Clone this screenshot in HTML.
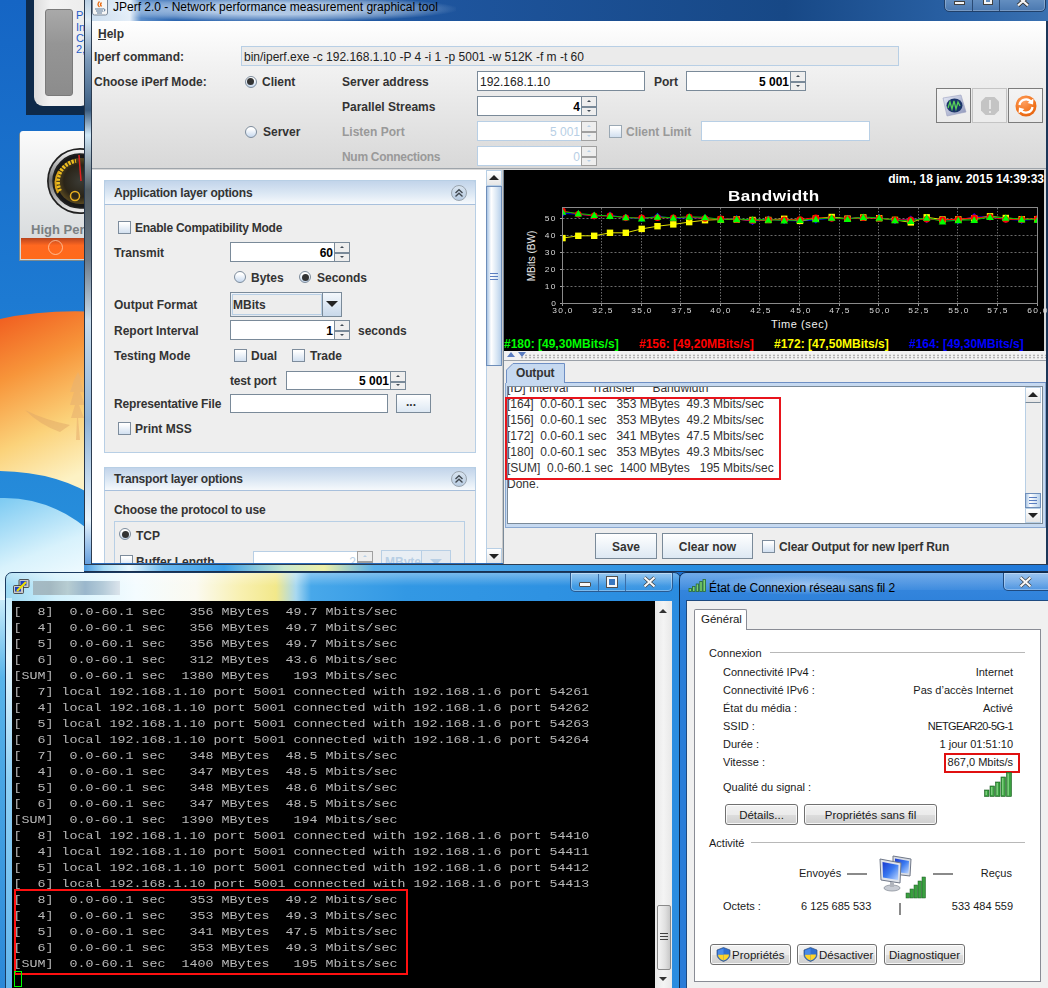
<!DOCTYPE html>
<html><head><meta charset="utf-8">
<style>
*{box-sizing:border-box;margin:0;padding:0}
html,body{width:1048px;height:988px;overflow:hidden;background:#1a6cc4}
body{position:relative;font-family:"Liberation Sans",sans-serif;}
.a{position:absolute}
.t{position:absolute;white-space:pre;line-height:1}
</style></head><body>
<div class="a" style="left:0;top:0;width:1048px;height:988px;background:#1a6cc8"></div>
<svg class="a" style="left:0;top:0" width="100" height="988">
  <defs>
    <linearGradient id="dg" x1="0" y1="0" x2="0" y2="1">
      <stop offset="0" stop-color="#1565c4"/>
      <stop offset="0.5" stop-color="#1d7ad2"/>
      <stop offset="1" stop-color="#2a94de"/>
    </linearGradient>
    <linearGradient id="lo" x1="0" y1="0" x2="0" y2="1">
      <stop offset="0" stop-color="#c8ecfa"/>
      <stop offset="0.2" stop-color="#58b4ea"/>
      <stop offset="1" stop-color="#2a88d8"/>
    </linearGradient>
    <linearGradient id="og" x1="0" y1="0" x2="0.25" y2="1">
      <stop offset="0" stop-color="#f05a1e"/>
      <stop offset="0.35" stop-color="#f7953a"/>
      <stop offset="0.7" stop-color="#fbd27a"/>
      <stop offset="1" stop-color="#fdf2c4"/>
    </linearGradient>
    <linearGradient id="gl" x1="0" y1="0" x2="0.4" y2="1">
      <stop offset="0" stop-color="#7ccaf2"/>
      <stop offset="0.6" stop-color="#d8f2fc"/>
      <stop offset="1" stop-color="#f4fcff"/>
    </linearGradient>
  </defs>
  <rect x="0" y="0" width="100" height="600" fill="url(#dg)"/>
  <rect x="0" y="600" width="100" height="388" fill="url(#lo)"/>
  <path d="M0 319 Q45 309 100 312 L100 500 Q60 472 0 471 Z" fill="url(#og)"/>
  <path d="M0 498 Q55 496 100 540 L100 600 L0 600 Z" fill="url(#gl)"/>
  <path d="M74 380 L78 372 L82 380 L80 380 L84 392 L80 392 L85 405 L79 405 L84 418 L78 418 L80 440 L76 440 L77 418 L71 418 L75 405 L70 405 L74 392 L70 392 Z" fill="#e8b070" opacity="0.6"/>
  <path d="M25 410 Q45 420 70 425 L60 432 Q40 425 25 410 Z" fill="#e0a868" opacity="0.5"/>
</svg>
<div class="a" style="left:26px;top:0px;width:60px;height:115px;background:#0e2a4a"></div>
<div class="a" style="left:34px;top:-10px;width:56px;height:116px;background:linear-gradient(90deg,#dcdcdc,#f2f2f2 30%,#ececec);border-radius:9px"></div>
<div class="a" style="left:45px;top:9px;width:28px;height:87px;background:linear-gradient(180deg,#a9a9a9,#959595 40%,#8c8c8c);border-radius:3px;border:1px solid #7a7a7a"></div>
<div class="t " style="left:76px;top:9px;font:11px 'Liberation Sans',sans-serif;color:#1f5cc8;">Pr</div>
<div class="t " style="left:76px;top:21px;font:11px 'Liberation Sans',sans-serif;color:#1f5cc8;">In</div>
<div class="t " style="left:76px;top:32px;font:11px 'Liberation Sans',sans-serif;color:#1f5cc8;">Ce</div>
<div class="t " style="left:76px;top:43px;font:11px 'Liberation Sans',sans-serif;color:#1f5cc8;">2,</div>
<div class="a" style="left:20px;top:131px;width:66px;height:129px;background:linear-gradient(180deg,#fbfbfb,#d2d6d8);border-radius:3px 0 0 0;box-shadow:-1px 1px 0 #7a8a90"></div>
<div class="a" style="left:21px;top:238px;width:65px;height:21px;background:linear-gradient(180deg,#b8441e,#ff6820 35%,#ff6a1a)"></div>
<div class="a" style="left:48px;top:240px;width:15px;height:15px;border:1px solid rgba(255,220,190,.7);border-radius:50%"></div>
<svg class="a" style="left:46px;top:147px" width="38" height="68"><defs><radialGradient id="gface" cx="0.5" cy="0.5" r="0.5"><stop offset="0" stop-color="#3a3a34"/><stop offset="0.7" stop-color="#2a2418"/><stop offset="1" stop-color="#584820"/></radialGradient>
<linearGradient id="gsil" x1="0" y1="0" x2="0" y2="1"><stop offset="0" stop-color="#f0f0f0"/><stop offset="0.5" stop-color="#707070"/><stop offset="1" stop-color="#e8e8e8"/></linearGradient></defs>
<circle cx="34" cy="34" r="33" fill="#202020"/><circle cx="34" cy="34" r="29.5" fill="none" stroke="url(#gsil)" stroke-width="3.5"/>
<circle cx="34" cy="34" r="26" fill="#181818"/><circle cx="34" cy="34" r="23" fill="url(#gface)"/>
<path d="M14 44 A21 21 0 0 1 30 14" stroke="#f0c020" stroke-width="4" fill="none" stroke-dasharray="2.2,1.3"/>
<path d="M12 46 A23 23 0 0 1 13 24" stroke="#d8a018" stroke-width="2" fill="none"/>
<line x1="35" y1="34" x2="33" y2="8" stroke="#e02020" stroke-width="1.5"/>
<circle cx="29" cy="49" r="4.5" fill="none" stroke="#e8b020" stroke-width="1.5"/></svg>
<div class="t " style="left:31px;top:222px;font:bold 13px 'Liberation Sans',sans-serif;color:#7a8082;">High Per</div>
<div class="a" style="left:84px;top:0px;width:964px;height:572px;background:linear-gradient(180deg,#1f5aa8,#2a6ab8);border-left:1px solid #1a2a40;border-radius:7px 0 0 0"></div>
<div class="a" style="left:85px;top:0px;width:963px;height:21px;background:linear-gradient(90deg,#c9dcee 0,#e4eef8 45px,#5a8cc8 56px,#2d66b0 90px,#1e559e 350px,#174886 700px,#2a62a6 880px,#4a80bc 1048px)"></div>
<div class="a" style="left:84px;top:0px;width:8px;height:572px;background:linear-gradient(180deg,#b8cfe4 0,#e0ecf6 20px,#7a98b8 60px,#3a5c80 110px,#d0e8f8 135px,#505a60 190px,#6a7a8a 260px,#c8dcec 320px,#90b4d8 420px,#e8f4fc 520px,#4a8ed8 572px);border-left:1px solid #26364a;border-right:1px solid #2c3c50"></div>
<div class="a" style="left:84px;top:564px;width:964px;height:8px;background:linear-gradient(90deg,#4a9ae0 0,#a8dcf6 20px,#e8f8fe 45px,#6ab8ee 80px,#3a9ee8 140px,#c8e8d0 200px,#eef0a8 240px,#5ab0ea 290px,#2a8ee0 600px,#2078d8);border-top:1px solid #2c3c50;border-bottom:1px solid #1a3050"></div>
<div class="a" style="left:1046px;top:21px;width:2px;height:543px;background:#1c3658"></div>
<div class="a" style="left:96px;top:-4px;width:360px;height:26px;background:radial-gradient(ellipse at center,rgba(235,245,255,.7) 30%,rgba(235,245,255,.35) 55%,rgba(255,255,255,0) 72%)"></div>
<svg class="a" style="left:92px;top:0px" width="17" height="16"><rect x="0.5" y="-3" width="15" height="18" rx="2" fill="#f6f6f6" stroke="#7a8898"/>
<path d="M7.5 1.5 Q4.5 4.5 7.5 7 M9.5 2.5 Q7.5 4.5 9.5 6.5" stroke="#e86a10" stroke-width="1.3" fill="none"/>
<path d="M3 9 H11.5 M4 11 H11 M5 13 H10" stroke="#5a7898" stroke-width="1" fill="none"/><path d="M11.5 8.5 Q14.5 9.5 12 11.5" stroke="#5a7898" stroke-width="1" fill="none"/></svg>
<div class="t " style="left:113px;top:0px;font:12px 'Liberation Sans',sans-serif;color:#000;">JPerf 2.0 - Network performance measurement graphical tool</div>
<div class="a" style="left:944px;top:-4px;width:102px;height:16px;background:linear-gradient(180deg,#6a94c4,#4a78b0);border:1px solid #20406a;border-radius:0 0 5px 5px;box-shadow:inset 0 0 0 1px rgba(255,255,255,.25)"></div>
<div class="a" style="left:972px;top:-2px;width:1px;height:13px;background:#2a4a74"></div>
<div class="a" style="left:999px;top:-2px;width:1px;height:13px;background:#2a4a74"></div>
<div class="a" style="left:954px;top:1px;width:11px;height:4px;background:#f4f4f4;border:1px solid #404040"></div>
<div class="a" style="left:984px;top:-2px;width:8px;height:6px;border:2px solid #f4f4f4;box-shadow:0 0 0 1px #404040"></div>
<svg class="a" style="left:1016px;top:-5px" width="14" height="12"><path d="M2 1.5 L12 10.5 M12 1.5 L2 10.5" stroke="#303030" stroke-width="3.8"/><path d="M2 1.5 L12 10.5 M12 1.5 L2 10.5" stroke="#f4f4f4" stroke-width="2.3"/></svg>
<div class="a" style="left:92px;top:21px;width:954px;height:147px;background:linear-gradient(180deg,#ffffff,#f2f2f2 30%,#d8d8d8)"></div>
<div class="a" style="left:92px;top:168px;width:954px;height:2px;background:#9ea4aa;border-bottom:1px solid #d8d8d8"></div>
<div class="t " style="left:98px;top:27px;font:bold 12px 'Liberation Sans',sans-serif;color:#333;">Help</div>
<div class="a" style="left:98px;top:39px;width:8px;height:1px;background:#333"></div>
<div class="t " style="left:94px;top:50px;font:bold 12px 'Liberation Sans',sans-serif;color:#333;">Iperf command:</div>
<div class="a" style="left:241px;top:46px;width:658px;height:20px;background:#ebebeb;border:1px solid #b8cfe5"></div>
<div class="t " style="left:244px;top:50px;font:12px 'Liberation Sans',sans-serif;color:#222;">bin/iperf.exe -c 192.168.1.10 -P 4 -i 1 -p 5001 -w 512K -f m -t 60</div>
<div class="t " style="left:94px;top:75px;font:bold 12px 'Liberation Sans',sans-serif;color:#333;">Choose iPerf Mode:</div>
<div class="a" style="left:244.5px;top:75.5px;width:12px;height:12px;border-radius:50%;border:1px solid #7d8c9c;background:linear-gradient(180deg,#ffffff 20%,#c6d8ee)"></div>
<div class="a" style="left:247.0px;top:78.0px;width:7px;height:7px;border-radius:50%;background:#333"></div>
<div class="t " style="left:262px;top:75px;font:bold 12px 'Liberation Sans',sans-serif;color:#333;">Client</div>
<div class="a" style="left:244.5px;top:125.5px;width:12px;height:12px;border-radius:50%;border:1px solid #7d8c9c;background:linear-gradient(180deg,#ffffff 20%,#c6d8ee)"></div>
<div class="t " style="left:263px;top:125px;font:bold 12px 'Liberation Sans',sans-serif;color:#333;">Server</div>
<div class="t " style="left:342px;top:75px;font:bold 12px 'Liberation Sans',sans-serif;color:#333;">Server address</div>
<div class="a" style="left:477px;top:71px;width:168px;height:20px;background:#fff;border:1px solid #7a8a99"></div>
<div class="t " style="left:480px;top:75px;font:12px 'Liberation Sans',sans-serif;color:#222;">192.168.1.10</div>
<div class="t " style="left:654px;top:75px;font:bold 12px 'Liberation Sans',sans-serif;color:#333;">Port</div>
<div class="a" style="left:686px;top:71px;width:105px;height:20px;background:#fff;border:1px solid #7a8a99"></div>
<div class="a" style="left:790px;top:71px;width:16px;height:11.0px;background:#eeeeee;border:1px solid #7a8a99"></div>
<div class="a" style="left:790px;top:81.0px;width:16px;height:10.0px;background:#eeeeee;border:1px solid #7a8a99;border-top-width:2px"></div>
<div class="a" style="left:795.5px;top:75px;width:0;height:0;border-left:2.5px solid transparent;border-right:2.5px solid transparent;border-bottom:2.5px solid #404a55"></div>
<div class="a" style="left:795.5px;top:85px;width:0;height:0;border-left:2.5px solid transparent;border-right:2.5px solid transparent;border-top:2.5px solid #404a55"></div>
<div class="t" style="right:259px;top:75px;font:bold 12px 'Liberation Sans',sans-serif;color:#000;text-align:right;">5 001</div>
<div class="t " style="left:342px;top:100px;font:bold 12px 'Liberation Sans',sans-serif;color:#333;">Parallel Streams</div>
<div class="a" style="left:477px;top:96px;width:105px;height:20px;background:#fff;border:1px solid #7a8a99"></div>
<div class="a" style="left:581px;top:96px;width:16px;height:11.0px;background:#eeeeee;border:1px solid #7a8a99"></div>
<div class="a" style="left:581px;top:106.0px;width:16px;height:10.0px;background:#eeeeee;border:1px solid #7a8a99;border-top-width:2px"></div>
<div class="a" style="left:586.5px;top:100px;width:0;height:0;border-left:2.5px solid transparent;border-right:2.5px solid transparent;border-bottom:2.5px solid #404a55"></div>
<div class="a" style="left:586.5px;top:110px;width:0;height:0;border-left:2.5px solid transparent;border-right:2.5px solid transparent;border-top:2.5px solid #404a55"></div>
<div class="t" style="right:468px;top:100px;font:bold 12px 'Liberation Sans',sans-serif;color:#000;text-align:right;">4</div>
<div class="t " style="left:342px;top:125px;font:bold 12px 'Liberation Sans',sans-serif;color:#999;">Listen Port</div>
<div class="a" style="left:477px;top:121px;width:105px;height:20px;background:#fff;border:1px solid #b8cfe5"></div>
<div class="a" style="left:581px;top:121px;width:16px;height:11.0px;background:#eeeeee;border:1px solid #a0a0a0"></div>
<div class="a" style="left:581px;top:131.0px;width:16px;height:10.0px;background:#eeeeee;border:1px solid #a0a0a0;border-top-width:2px"></div>
<div class="a" style="left:586.5px;top:125px;width:0;height:0;border-left:2.5px solid transparent;border-right:2.5px solid transparent;border-bottom:2.5px solid #b8cfe5"></div>
<div class="a" style="left:586.5px;top:135px;width:0;height:0;border-left:2.5px solid transparent;border-right:2.5px solid transparent;border-top:2.5px solid #b8cfe5"></div>
<div class="t" style="right:468px;top:125px;font:12px 'Liberation Sans',sans-serif;color:#b8cfe5;text-align:right;">5 001</div>
<div class="a" style="left:609px;top:125px;width:13px;height:13px;border:1px solid #9aa8b4;background:linear-gradient(180deg,#ffffff 10%,#d2e0f0)"></div>
<div class="t " style="left:626px;top:125px;font:bold 12px 'Liberation Sans',sans-serif;color:#999;">Client Limit</div>
<div class="a" style="left:701px;top:121px;width:169px;height:20px;background:#fff;border:1px solid #b8cfe5"></div>
<div class="t " style="left:342px;top:150px;font:bold 12px 'Liberation Sans',sans-serif;color:#999;letter-spacing:-0.3px">Num Connections</div>
<div class="a" style="left:477px;top:146px;width:105px;height:20px;background:#fff;border:1px solid #b8cfe5"></div>
<div class="a" style="left:581px;top:146px;width:16px;height:11.0px;background:#eeeeee;border:1px solid #a0a0a0"></div>
<div class="a" style="left:581px;top:156.0px;width:16px;height:10.0px;background:#eeeeee;border:1px solid #a0a0a0;border-top-width:2px"></div>
<div class="a" style="left:586.5px;top:150px;width:0;height:0;border-left:2.5px solid transparent;border-right:2.5px solid transparent;border-bottom:2.5px solid #b8cfe5"></div>
<div class="a" style="left:586.5px;top:160px;width:0;height:0;border-left:2.5px solid transparent;border-right:2.5px solid transparent;border-top:2.5px solid #b8cfe5"></div>
<div class="t" style="right:468px;top:150px;font:12px 'Liberation Sans',sans-serif;color:#b8cfe5;text-align:right;">0</div>
<div class="a" style="left:936px;top:88px;width:35px;height:35px;border:1px solid #7c7c7c;background:linear-gradient(180deg,#f4f4f4,#eaeaea)"></div>
<div class="a" style="left:972px;top:88px;width:35px;height:35px;border:1px solid #c4c4c4;background:#ececec"></div>
<div class="a" style="left:1008px;top:88px;width:35px;height:35px;border:1px solid #7c7c7c;background:linear-gradient(180deg,#f4f4f4,#eaeaea)"></div>
<svg class="a" style="left:940px;top:92px" width="28" height="28">
<defs><linearGradient id="ib1" x1="0" y1="0" x2="1" y2="1"><stop offset="0" stop-color="#e8ecf8"/><stop offset="1" stop-color="#8c94b8"/></linearGradient></defs>
<path d="M3 6 L21 3 L26 20 L7 24 Z" fill="url(#ib1)" stroke="#9aa0c0" stroke-width="0.6"/>
<ellipse cx="14.5" cy="13.5" rx="8" ry="7" fill="#1a3468"/>
<path d="M8 16 L10 10 L12 17 L14 9 L16 17 L18 10 L20 14" stroke="#58d058" stroke-width="1.3" fill="none"/>
</svg>
<svg class="a" style="left:976px;top:92px" width="28" height="28">
<path d="M9.5 5 H18.5 L23 9.5 V18.5 L18.5 23 H9.5 L5 18.5 V9.5 Z" fill="#c4c4c4"/>
<rect x="13" y="8" width="2" height="9" fill="#e6e6e6"/><rect x="13" y="19" width="2" height="2" fill="#e6e6e6"/>
</svg>
<svg class="a" style="left:1012px;top:92px" width="28" height="28">
<defs><radialGradient id="ib3" cx="0.4" cy="0.3" r="0.8"><stop offset="0" stop-color="#ffa060"/><stop offset="0.7" stop-color="#f07018"/><stop offset="1" stop-color="#e06010"/></radialGradient></defs>
<circle cx="14" cy="14" r="10.5" fill="url(#ib3)"/>
<path d="M7.5 13 A6.5 6.5 0 0 1 19.5 10.5" stroke="#fff" stroke-width="2.3" fill="none"/>
<path d="M21.5 6.5 L21 12.5 L15.5 11 Z" fill="#fff"/>
<path d="M20.5 15 A6.5 6.5 0 0 1 8.5 17.5" stroke="#fff" stroke-width="2.3" fill="none"/>
<path d="M6.5 21.5 L7 15.5 L12.5 17 Z" fill="#fff"/>
</svg>
<div class="a" style="left:0;top:0;width:1048px;height:563px;overflow:hidden">
<div class="a" style="left:92px;top:170px;width:410px;height:394px;background:#ffffff"></div>
<div class="a" style="left:104px;top:180px;width:372px;height:273px;background:#eeeeee;border:1px solid #b8cfe5"></div>
<div class="a" style="left:104px;top:180px;width:372px;height:25px;background:linear-gradient(180deg,#c2d4ea,#dce8f4 55%,#f6f9fc);border:1px solid #b8cfe5;border-bottom:1px solid #a8c0dc;border-radius:3px 3px 0 0"></div>
<div class="t " style="left:114px;top:186px;font:bold 12px 'Liberation Sans',sans-serif;color:#333;letter-spacing:-0.2px">Application layer options</div>
<div class="a" style="left:451px;top:184.5px;width:16px;height:16px;border-radius:50%;border:1px solid #9aa4ae;background:linear-gradient(180deg,#d8e4f0,#b8cce2)"></div>
<svg class="a" style="left:454px;top:187.5px" width="10" height="10"><path d="M1.5 5 L5 1.8 L8.5 5 M1.5 8.5 L5 5.3 L8.5 8.5" stroke="#404850" stroke-width="1.4" fill="none"/></svg>
<div class="a" style="left:118px;top:221px;width:13px;height:13px;border:1px solid #7d8c9c;background:linear-gradient(180deg,#ffffff 10%,#d2e0f0)"></div>
<div class="t " style="left:135px;top:221px;font:bold 12px 'Liberation Sans',sans-serif;color:#333;letter-spacing:-0.25px">Enable Compatibility Mode</div>
<div class="t " style="left:114px;top:246px;font:bold 12px 'Liberation Sans',sans-serif;color:#333;">Transmit</div>
<div class="a" style="left:230px;top:242px;width:105px;height:20px;background:#fff;border:1px solid #7a8a99"></div>
<div class="a" style="left:334px;top:242px;width:16px;height:11.0px;background:#eeeeee;border:1px solid #7a8a99"></div>
<div class="a" style="left:334px;top:252.0px;width:16px;height:10.0px;background:#eeeeee;border:1px solid #7a8a99;border-top-width:2px"></div>
<div class="a" style="left:339.5px;top:246px;width:0;height:0;border-left:2.5px solid transparent;border-right:2.5px solid transparent;border-bottom:2.5px solid #404a55"></div>
<div class="a" style="left:339.5px;top:256px;width:0;height:0;border-left:2.5px solid transparent;border-right:2.5px solid transparent;border-top:2.5px solid #404a55"></div>
<div class="t" style="right:715px;top:246px;font:bold 12px 'Liberation Sans',sans-serif;color:#000;text-align:right;">60</div>
<div class="a" style="left:234px;top:271px;width:12px;height:12px;border-radius:50%;border:1px solid #7d8c9c;background:linear-gradient(180deg,#ffffff 20%,#c6d8ee)"></div>
<div class="t " style="left:251px;top:271px;font:bold 12px 'Liberation Sans',sans-serif;color:#333;">Bytes</div>
<div class="a" style="left:299px;top:271px;width:12px;height:12px;border-radius:50%;border:1px solid #7d8c9c;background:linear-gradient(180deg,#ffffff 20%,#c6d8ee)"></div>
<div class="a" style="left:301.5px;top:273.5px;width:7px;height:7px;border-radius:50%;background:#333"></div>
<div class="t " style="left:317px;top:271px;font:bold 12px 'Liberation Sans',sans-serif;color:#333;">Seconds</div>
<div class="t " style="left:114px;top:298px;font:bold 12px 'Liberation Sans',sans-serif;color:#333;">Output Format</div>
<div class="a" style="left:230px;top:292px;width:112px;height:25px;background:linear-gradient(180deg,#eef2f8,#e4e8ee);border:1px solid #7a8a99"></div>
<div class="a" style="left:232px;top:294px;width:90px;height:21px;background:#ededed;border:1px solid #b8cfe5"></div>
<div class="t " style="left:233px;top:298px;font:bold 12px 'Liberation Sans',sans-serif;color:#333;">MBits</div>
<div class="a" style="left:322px;top:293px;width:19px;height:23px;background:linear-gradient(180deg,#f4f8fc,#c8d8ea);border-left:1px solid #7a8a99"></div>
<div class="a" style="left:326px;top:301px;width:0;height:0;border-left:6px solid transparent;border-right:6px solid transparent;border-top:6px solid #222"></div>
<div class="t " style="left:114px;top:324px;font:bold 12px 'Liberation Sans',sans-serif;color:#333;">Report Interval</div>
<div class="a" style="left:230px;top:320px;width:105px;height:20px;background:#fff;border:1px solid #7a8a99"></div>
<div class="a" style="left:334px;top:320px;width:16px;height:11.0px;background:#eeeeee;border:1px solid #7a8a99"></div>
<div class="a" style="left:334px;top:330.0px;width:16px;height:10.0px;background:#eeeeee;border:1px solid #7a8a99;border-top-width:2px"></div>
<div class="a" style="left:339.5px;top:324px;width:0;height:0;border-left:2.5px solid transparent;border-right:2.5px solid transparent;border-bottom:2.5px solid #404a55"></div>
<div class="a" style="left:339.5px;top:334px;width:0;height:0;border-left:2.5px solid transparent;border-right:2.5px solid transparent;border-top:2.5px solid #404a55"></div>
<div class="t" style="right:715px;top:324px;font:bold 12px 'Liberation Sans',sans-serif;color:#000;text-align:right;">1</div>
<div class="t " style="left:358px;top:324px;font:bold 12px 'Liberation Sans',sans-serif;color:#333;">seconds</div>
<div class="t " style="left:114px;top:349px;font:bold 12px 'Liberation Sans',sans-serif;color:#333;">Testing Mode</div>
<div class="a" style="left:234px;top:349px;width:13px;height:13px;border:1px solid #7d8c9c;background:linear-gradient(180deg,#ffffff 10%,#d2e0f0)"></div>
<div class="t " style="left:251px;top:349px;font:bold 12px 'Liberation Sans',sans-serif;color:#333;">Dual</div>
<div class="a" style="left:292px;top:349px;width:13px;height:13px;border:1px solid #7d8c9c;background:linear-gradient(180deg,#ffffff 10%,#d2e0f0)"></div>
<div class="t " style="left:310px;top:349px;font:bold 12px 'Liberation Sans',sans-serif;color:#333;">Trade</div>
<div class="t " style="left:230px;top:374px;font:bold 12px 'Liberation Sans',sans-serif;color:#333;letter-spacing:-0.2px">test port</div>
<div class="a" style="left:286px;top:371px;width:105px;height:19px;background:#fff;border:1px solid #7a8a99"></div>
<div class="a" style="left:390px;top:371px;width:16px;height:10.5px;background:#eeeeee;border:1px solid #7a8a99"></div>
<div class="a" style="left:390px;top:380.5px;width:16px;height:9.5px;background:#eeeeee;border:1px solid #7a8a99;border-top-width:2px"></div>
<div class="a" style="left:395.5px;top:375px;width:0;height:0;border-left:2.5px solid transparent;border-right:2.5px solid transparent;border-bottom:2.5px solid #404a55"></div>
<div class="a" style="left:395.5px;top:384px;width:0;height:0;border-left:2.5px solid transparent;border-right:2.5px solid transparent;border-top:2.5px solid #404a55"></div>
<div class="t" style="right:659px;top:374px;font:bold 12px 'Liberation Sans',sans-serif;color:#000;text-align:right;">5 001</div>
<div class="t " style="left:114px;top:397px;font:bold 12px 'Liberation Sans',sans-serif;color:#333;letter-spacing:-0.15px">Representative File</div>
<div class="a" style="left:230px;top:394px;width:158px;height:19px;background:#fff;border:1px solid #7a8a99"></div>
<div class="a" style="left:396px;top:394px;width:35px;height:19px;border:1px solid #7a8a99;background:linear-gradient(180deg,#ffffff,#dde8f3)"></div>
<div class="t " style="left:406px;top:395px;font:bold 12px 'Liberation Sans',sans-serif;color:#333;">...</div>
<div class="a" style="left:118px;top:422px;width:13px;height:13px;border:1px solid #7d8c9c;background:linear-gradient(180deg,#ffffff 10%,#d2e0f0)"></div>
<div class="t " style="left:135px;top:422px;font:bold 12px 'Liberation Sans',sans-serif;color:#333;letter-spacing:0px">Print MSS</div>
<div class="a" style="left:104px;top:467px;width:372px;height:133px;background:#eeeeee;border:1px solid #b8cfe5"></div>
<div class="a" style="left:104px;top:467px;width:372px;height:24px;background:linear-gradient(180deg,#c2d4ea,#dce8f4 55%,#f6f9fc);border:1px solid #b8cfe5;border-bottom:1px solid #a8c0dc;border-radius:3px 3px 0 0"></div>
<div class="t " style="left:114px;top:472px;font:bold 12px 'Liberation Sans',sans-serif;color:#333;letter-spacing:-0.2px">Transport layer options</div>
<div class="a" style="left:451px;top:471.0px;width:16px;height:16px;border-radius:50%;border:1px solid #9aa4ae;background:linear-gradient(180deg,#d8e4f0,#b8cce2)"></div>
<svg class="a" style="left:454px;top:474.0px" width="10" height="10"><path d="M1.5 5 L5 1.8 L8.5 5 M1.5 8.5 L5 5.3 L8.5 8.5" stroke="#404850" stroke-width="1.4" fill="none"/></svg>
<div class="t " style="left:114px;top:503px;font:bold 12px 'Liberation Sans',sans-serif;color:#333;letter-spacing:-0.15px">Choose the protocol to use</div>
<div class="a" style="left:114px;top:521px;width:351px;height:79px;border:1px solid #b8cfe5"></div>
<div class="a" style="left:119px;top:528px;width:12px;height:12px;border-radius:50%;border:1px solid #7d8c9c;background:linear-gradient(180deg,#ffffff 20%,#c6d8ee)"></div>
<div class="a" style="left:121.5px;top:530.5px;width:7px;height:7px;border-radius:50%;background:#333"></div>
<div class="t " style="left:136px;top:529px;font:bold 12px 'Liberation Sans',sans-serif;color:#333;">TCP</div>
<div class="a" style="left:120px;top:555px;width:13px;height:13px;border:1px solid #7d8c9c;background:linear-gradient(180deg,#ffffff 10%,#d2e0f0)"></div>
<div class="t " style="left:136px;top:555px;font:bold 12px 'Liberation Sans',sans-serif;color:#333;">Buffer Length</div>
<div class="a" style="left:253px;top:551px;width:105px;height:19px;background:#fff;border:1px solid #b8cfe5"></div>
<div class="a" style="left:357px;top:551px;width:16px;height:10.5px;background:#eeeeee;border:1px solid #a0a0a0"></div>
<div class="a" style="left:357px;top:560.5px;width:16px;height:9.5px;background:#eeeeee;border:1px solid #a0a0a0;border-top-width:2px"></div>
<div class="a" style="left:362.5px;top:555px;width:0;height:0;border-left:2.5px solid transparent;border-right:2.5px solid transparent;border-bottom:2.5px solid #b8cfe5"></div>
<div class="a" style="left:362.5px;top:564px;width:0;height:0;border-left:2.5px solid transparent;border-right:2.5px solid transparent;border-top:2.5px solid #b8cfe5"></div>
<div class="t" style="right:692px;top:555px;font:12px 'Liberation Sans',sans-serif;color:#b8cfe5;text-align:right;">2</div>
<div class="a" style="left:381px;top:550px;width:70px;height:25px;border:1px solid #b8cfe5;background:#e8eef4"></div>
<div class="t " style="left:385px;top:555px;font:bold 12px 'Liberation Sans',sans-serif;color:#b8cfe5;">MBytes</div>
<div class="a" style="left:421px;top:550px;width:30px;height:25px;border:1px solid #b8cfe5;background:#e4eaf0"></div>
<div class="a" style="left:430px;top:559px;width:0;height:0;border-left:6px solid transparent;border-right:6px solid transparent;border-top:6px solid #b8cfe5"></div>
<div class="a" style="left:486px;top:170px;width:16px;height:394px;background:#eeeeee;border-left:1px solid #b8cfe5"></div>
<div class="a" style="left:486px;top:170px;width:16px;height:16px;background:linear-gradient(180deg,#ffffff,#e6e6e6);border:1px solid #b8cfe5"></div>
<div class="a" style="left:489px;top:175px;width:0;height:0;border-left:5px solid transparent;border-right:5px solid transparent;border-bottom:5px solid #222"></div>
<div class="a" style="left:486px;top:186px;width:16px;height:180px;background:linear-gradient(90deg,#a8c4e4,#ffffff 30%,#d8e6f4 70%,#b8d0ea);border:1px solid #6e8eba"></div>
<div class="a" style="left:490px;top:273px;width:8px;height:1px;background:#5a7ec0"></div>
<div class="a" style="left:490px;top:276px;width:8px;height:1px;background:#5a7ec0"></div>
<div class="a" style="left:490px;top:279px;width:8px;height:1px;background:#5a7ec0"></div>
<div class="a" style="left:486px;top:548px;width:16px;height:16px;background:linear-gradient(180deg,#ffffff,#e6e6e6);border:1px solid #b8cfe5"></div>
<div class="a" style="left:489px;top:554px;width:0;height:0;border-left:5px solid transparent;border-right:5px solid transparent;border-top:5px solid #222"></div>
<div class="a" style="left:502px;top:170px;width:2px;height:394px;background:#c8c8c8"></div>
</div>
<svg class="a" style="left:503px;top:170px" width="544" height="181" viewBox="503 170 544 181">
<rect x="503" y="170" width="541" height="181" fill="#000"/>
<line x1="562.5" y1="286.5" x2="1037.5" y2="286.5" stroke="#6a6a6a" stroke-width="1" stroke-dasharray="2,2"/>
<line x1="562.5" y1="269.5" x2="1037.5" y2="269.5" stroke="#6a6a6a" stroke-width="1" stroke-dasharray="2,2"/>
<line x1="562.5" y1="252.5" x2="1037.5" y2="252.5" stroke="#6a6a6a" stroke-width="1" stroke-dasharray="2,2"/>
<line x1="562.5" y1="235.5" x2="1037.5" y2="235.5" stroke="#6a6a6a" stroke-width="1" stroke-dasharray="2,2"/>
<line x1="562.5" y1="218.5" x2="1037.5" y2="218.5" stroke="#6a6a6a" stroke-width="1" stroke-dasharray="2,2"/>
<line x1="601.5" y1="208" x2="601.5" y2="303.5" stroke="#6a6a6a" stroke-width="1" stroke-dasharray="1.5,1.5"/>
<line x1="641.5" y1="208" x2="641.5" y2="303.5" stroke="#6a6a6a" stroke-width="1" stroke-dasharray="1.5,1.5"/>
<line x1="680.5" y1="208" x2="680.5" y2="303.5" stroke="#6a6a6a" stroke-width="1" stroke-dasharray="1.5,1.5"/>
<line x1="720.5" y1="208" x2="720.5" y2="303.5" stroke="#6a6a6a" stroke-width="1" stroke-dasharray="1.5,1.5"/>
<line x1="759.5" y1="208" x2="759.5" y2="303.5" stroke="#6a6a6a" stroke-width="1" stroke-dasharray="1.5,1.5"/>
<line x1="799.5" y1="208" x2="799.5" y2="303.5" stroke="#6a6a6a" stroke-width="1" stroke-dasharray="1.5,1.5"/>
<line x1="839.5" y1="208" x2="839.5" y2="303.5" stroke="#6a6a6a" stroke-width="1" stroke-dasharray="1.5,1.5"/>
<line x1="878.5" y1="208" x2="878.5" y2="303.5" stroke="#6a6a6a" stroke-width="1" stroke-dasharray="1.5,1.5"/>
<line x1="918.5" y1="208" x2="918.5" y2="303.5" stroke="#6a6a6a" stroke-width="1" stroke-dasharray="1.5,1.5"/>
<line x1="957.5" y1="208" x2="957.5" y2="303.5" stroke="#6a6a6a" stroke-width="1" stroke-dasharray="1.5,1.5"/>
<line x1="997.5" y1="208" x2="997.5" y2="303.5" stroke="#6a6a6a" stroke-width="1" stroke-dasharray="1.5,1.5"/>
<rect x="562.5" y="207.5" width="475.0" height="96.0" fill="none" stroke="#8a8a8a" stroke-width="1"/>
<line x1="560" y1="303.5" x2="562" y2="303.5" stroke="#9a9a9a"/>
<line x1="560" y1="286.5" x2="562" y2="286.5" stroke="#9a9a9a"/>
<line x1="560" y1="269.5" x2="562" y2="269.5" stroke="#9a9a9a"/>
<line x1="560" y1="252.5" x2="562" y2="252.5" stroke="#9a9a9a"/>
<line x1="560" y1="235.5" x2="562" y2="235.5" stroke="#9a9a9a"/>
<line x1="560" y1="218.5" x2="562" y2="218.5" stroke="#9a9a9a"/>
<line x1="562.5" y1="304" x2="562.5" y2="306" stroke="#9a9a9a"/>
<line x1="601.5" y1="304" x2="601.5" y2="306" stroke="#9a9a9a"/>
<line x1="641.5" y1="304" x2="641.5" y2="306" stroke="#9a9a9a"/>
<line x1="680.5" y1="304" x2="680.5" y2="306" stroke="#9a9a9a"/>
<line x1="720.5" y1="304" x2="720.5" y2="306" stroke="#9a9a9a"/>
<line x1="759.5" y1="304" x2="759.5" y2="306" stroke="#9a9a9a"/>
<line x1="799.5" y1="304" x2="799.5" y2="306" stroke="#9a9a9a"/>
<line x1="839.5" y1="304" x2="839.5" y2="306" stroke="#9a9a9a"/>
<line x1="878.5" y1="304" x2="878.5" y2="306" stroke="#9a9a9a"/>
<line x1="918.5" y1="304" x2="918.5" y2="306" stroke="#9a9a9a"/>
<line x1="957.5" y1="304" x2="957.5" y2="306" stroke="#9a9a9a"/>
<line x1="997.5" y1="304" x2="997.5" y2="306" stroke="#9a9a9a"/>
<line x1="1037.5" y1="304" x2="1037.5" y2="306" stroke="#9a9a9a"/>
<defs><clipPath id="pc"><rect x="563" y="208" width="474" height="96"/></clipPath></defs><g clip-path="url(#pc)">
<polyline points="562.5,213.4 578.3,214.2 594.2,215.9 610.0,215.4 625.8,217.7 641.7,218.5 657.5,216.5 673.3,218.2 689.2,217.7 705.0,218.0 720.8,219.2 736.7,218.7 752.5,221.4 768.3,219.4 784.2,220.5 800.0,220.9 815.8,219.9 831.7,218.2 847.5,218.5 863.3,217.5 879.2,217.8 895.0,220.5 910.8,219.2 926.7,219.5 942.5,219.5 958.3,220.5 974.2,216.8 990.0,217.0 1005.8,219.2 1021.7,220.2 1037.5,219.2" fill="none" stroke="#0000ff" stroke-width="1"/>
<polyline points="562.5,238.1 578.3,235.8 594.2,235.8 610.0,232.8 625.8,232.8 641.7,228.9 657.5,226.2 673.3,224.4 689.2,222.1 705.0,220.2 720.8,219.5 736.7,219.4 752.5,220.0 768.3,220.0 784.2,218.8 800.0,220.9 815.8,218.5 831.7,217.0 847.5,218.7 863.3,217.5 879.2,218.2 895.0,219.9 910.8,222.4 926.7,217.3 942.5,219.5 958.3,219.4 974.2,218.5 990.0,216.3 1005.8,218.0 1021.7,219.2 1037.5,219.2" fill="none" stroke="#e0e000" stroke-width="1"/>
<polyline points="562.5,210.9 578.3,214.2 594.2,215.9 610.0,215.9 625.8,217.7 641.7,217.7 657.5,217.7 673.3,217.7 689.2,217.1 705.0,218.5 720.8,218.8 736.7,219.2 752.5,220.5 768.3,219.7 784.2,219.9 800.0,219.5 815.8,217.7 831.7,218.5 847.5,218.8 863.3,217.7 879.2,218.2 895.0,219.9 910.8,219.9 926.7,219.2 942.5,219.9 958.3,219.2 974.2,217.7 990.0,217.1 1005.8,219.5 1021.7,219.4 1037.5,218.7" fill="none" stroke="#ff0000" stroke-width="1"/>
<polyline points="562.5,211.7 578.3,213.4 594.2,215.1 610.0,215.9 625.8,217.3 641.7,218.5 657.5,216.8 673.3,217.8 689.2,216.8 705.0,217.3 720.8,219.4 736.7,219.0 752.5,219.7 768.3,219.7 784.2,220.4 800.0,220.0 815.8,219.2 831.7,217.8 847.5,219.0 863.3,217.1 879.2,217.8 895.0,220.2 910.8,220.9 926.7,217.7 942.5,221.4 958.3,220.2 974.2,219.9 990.0,217.0 1005.8,217.8 1021.7,219.2 1037.5,219.7" fill="none" stroke="#00c000" stroke-width="1"/>
<path d="M562.5 209.6 L566.3 213.4 L562.5 217.2 L558.7 213.4 Z" fill="#0000ff"/>
<path d="M578.3 210.4 L582.1 214.2 L578.3 218.1 L574.5 214.2 Z" fill="#0000ff"/>
<path d="M594.2 212.1 L598.0 215.9 L594.2 219.8 L590.4 215.9 Z" fill="#0000ff"/>
<path d="M610.0 211.6 L613.8 215.4 L610.0 219.2 L606.2 215.4 Z" fill="#0000ff"/>
<path d="M625.8 213.8 L629.6 217.7 L625.8 221.5 L622.0 217.7 Z" fill="#0000ff"/>
<path d="M641.7 214.7 L645.5 218.5 L641.7 222.3 L637.9 218.5 Z" fill="#0000ff"/>
<path d="M657.5 212.7 L661.3 216.5 L657.5 220.3 L653.7 216.5 Z" fill="#0000ff"/>
<path d="M673.3 214.4 L677.1 218.2 L673.3 222.0 L669.5 218.2 Z" fill="#0000ff"/>
<path d="M689.2 213.8 L693.0 217.7 L689.2 221.5 L685.4 217.7 Z" fill="#0000ff"/>
<path d="M705.0 214.2 L708.8 218.0 L705.0 221.8 L701.2 218.0 Z" fill="#0000ff"/>
<path d="M720.8 215.4 L724.6 219.2 L720.8 223.0 L717.0 219.2 Z" fill="#0000ff"/>
<path d="M736.7 214.9 L740.5 218.7 L736.7 222.5 L732.9 218.7 Z" fill="#0000ff"/>
<path d="M752.5 217.6 L756.3 221.4 L752.5 225.2 L748.7 221.4 Z" fill="#0000ff"/>
<path d="M768.3 215.6 L772.1 219.4 L768.3 223.2 L764.5 219.4 Z" fill="#0000ff"/>
<path d="M784.2 216.7 L788.0 220.5 L784.2 224.3 L780.4 220.5 Z" fill="#0000ff"/>
<path d="M800.0 217.1 L803.8 220.9 L800.0 224.7 L796.2 220.9 Z" fill="#0000ff"/>
<path d="M815.8 216.1 L819.6 219.9 L815.8 223.7 L812.0 219.9 Z" fill="#0000ff"/>
<path d="M831.7 214.4 L835.5 218.2 L831.7 222.0 L827.9 218.2 Z" fill="#0000ff"/>
<path d="M847.5 214.7 L851.3 218.5 L847.5 222.3 L843.7 218.5 Z" fill="#0000ff"/>
<path d="M863.3 213.7 L867.1 217.5 L863.3 221.3 L859.5 217.5 Z" fill="#0000ff"/>
<path d="M879.2 214.0 L883.0 217.8 L879.2 221.6 L875.4 217.8 Z" fill="#0000ff"/>
<path d="M895.0 216.7 L898.8 220.5 L895.0 224.3 L891.2 220.5 Z" fill="#0000ff"/>
<path d="M910.8 215.4 L914.6 219.2 L910.8 223.0 L907.0 219.2 Z" fill="#0000ff"/>
<path d="M926.7 215.7 L930.5 219.5 L926.7 223.3 L922.9 219.5 Z" fill="#0000ff"/>
<path d="M942.5 215.7 L946.3 219.5 L942.5 223.3 L938.7 219.5 Z" fill="#0000ff"/>
<path d="M958.3 216.7 L962.1 220.5 L958.3 224.3 L954.5 220.5 Z" fill="#0000ff"/>
<path d="M974.2 213.0 L978.0 216.8 L974.2 220.6 L970.4 216.8 Z" fill="#0000ff"/>
<path d="M990.0 213.2 L993.8 217.0 L990.0 220.8 L986.2 217.0 Z" fill="#0000ff"/>
<path d="M1005.8 215.4 L1009.6 219.2 L1005.8 223.0 L1002.0 219.2 Z" fill="#0000ff"/>
<path d="M1021.7 216.4 L1025.5 220.2 L1021.7 224.0 L1017.9 220.2 Z" fill="#0000ff"/>
<path d="M1037.5 215.4 L1041.3 219.2 L1037.5 223.0 L1033.7 219.2 Z" fill="#0000ff"/>
<rect x="559.3" y="234.9" width="6.4" height="6.4" fill="#ffff00"/>
<rect x="575.1" y="232.6" width="6.4" height="6.4" fill="#ffff00"/>
<rect x="591.0" y="232.6" width="6.4" height="6.4" fill="#ffff00"/>
<rect x="606.8" y="229.6" width="6.4" height="6.4" fill="#ffff00"/>
<rect x="622.6" y="229.6" width="6.4" height="6.4" fill="#ffff00"/>
<rect x="638.5" y="225.7" width="6.4" height="6.4" fill="#ffff00"/>
<rect x="654.3" y="223.0" width="6.4" height="6.4" fill="#ffff00"/>
<rect x="670.1" y="221.2" width="6.4" height="6.4" fill="#ffff00"/>
<rect x="686.0" y="218.9" width="6.4" height="6.4" fill="#ffff00"/>
<rect x="701.8" y="217.0" width="6.4" height="6.4" fill="#ffff00"/>
<rect x="717.6" y="216.3" width="6.4" height="6.4" fill="#ffff00"/>
<rect x="733.5" y="216.2" width="6.4" height="6.4" fill="#ffff00"/>
<rect x="749.3" y="216.8" width="6.4" height="6.4" fill="#ffff00"/>
<rect x="765.1" y="216.8" width="6.4" height="6.4" fill="#ffff00"/>
<rect x="781.0" y="215.6" width="6.4" height="6.4" fill="#ffff00"/>
<rect x="796.8" y="217.7" width="6.4" height="6.4" fill="#ffff00"/>
<rect x="812.6" y="215.3" width="6.4" height="6.4" fill="#ffff00"/>
<rect x="828.5" y="213.8" width="6.4" height="6.4" fill="#ffff00"/>
<rect x="844.3" y="215.5" width="6.4" height="6.4" fill="#ffff00"/>
<rect x="860.1" y="214.3" width="6.4" height="6.4" fill="#ffff00"/>
<rect x="876.0" y="215.0" width="6.4" height="6.4" fill="#ffff00"/>
<rect x="891.8" y="216.7" width="6.4" height="6.4" fill="#ffff00"/>
<rect x="907.6" y="219.2" width="6.4" height="6.4" fill="#ffff00"/>
<rect x="923.5" y="214.1" width="6.4" height="6.4" fill="#ffff00"/>
<rect x="939.3" y="216.3" width="6.4" height="6.4" fill="#ffff00"/>
<rect x="955.1" y="216.2" width="6.4" height="6.4" fill="#ffff00"/>
<rect x="971.0" y="215.3" width="6.4" height="6.4" fill="#ffff00"/>
<rect x="986.8" y="213.1" width="6.4" height="6.4" fill="#ffff00"/>
<rect x="1002.6" y="214.8" width="6.4" height="6.4" fill="#ffff00"/>
<rect x="1018.5" y="216.0" width="6.4" height="6.4" fill="#ffff00"/>
<rect x="1034.3" y="216.0" width="6.4" height="6.4" fill="#ffff00"/>
<circle cx="562.5" cy="210.9" r="3.3" fill="#ff0000"/>
<circle cx="578.3" cy="214.2" r="3.3" fill="#ff0000"/>
<circle cx="594.2" cy="215.9" r="3.3" fill="#ff0000"/>
<circle cx="610.0" cy="215.9" r="3.3" fill="#ff0000"/>
<circle cx="625.8" cy="217.7" r="3.3" fill="#ff0000"/>
<circle cx="641.7" cy="217.7" r="3.3" fill="#ff0000"/>
<circle cx="657.5" cy="217.7" r="3.3" fill="#ff0000"/>
<circle cx="673.3" cy="217.7" r="3.3" fill="#ff0000"/>
<circle cx="689.2" cy="217.1" r="3.3" fill="#ff0000"/>
<circle cx="705.0" cy="218.5" r="3.3" fill="#ff0000"/>
<circle cx="720.8" cy="218.8" r="3.3" fill="#ff0000"/>
<circle cx="736.7" cy="219.2" r="3.3" fill="#ff0000"/>
<circle cx="752.5" cy="220.5" r="3.3" fill="#ff0000"/>
<circle cx="768.3" cy="219.7" r="3.3" fill="#ff0000"/>
<circle cx="784.2" cy="219.9" r="3.3" fill="#ff0000"/>
<circle cx="800.0" cy="219.5" r="3.3" fill="#ff0000"/>
<circle cx="815.8" cy="217.7" r="3.3" fill="#ff0000"/>
<circle cx="831.7" cy="218.5" r="3.3" fill="#ff0000"/>
<circle cx="847.5" cy="218.8" r="3.3" fill="#ff0000"/>
<circle cx="863.3" cy="217.7" r="3.3" fill="#ff0000"/>
<circle cx="879.2" cy="218.2" r="3.3" fill="#ff0000"/>
<circle cx="895.0" cy="219.9" r="3.3" fill="#ff0000"/>
<circle cx="910.8" cy="219.9" r="3.3" fill="#ff0000"/>
<circle cx="926.7" cy="219.2" r="3.3" fill="#ff0000"/>
<circle cx="942.5" cy="219.9" r="3.3" fill="#ff0000"/>
<circle cx="958.3" cy="219.2" r="3.3" fill="#ff0000"/>
<circle cx="974.2" cy="217.7" r="3.3" fill="#ff0000"/>
<circle cx="990.0" cy="217.1" r="3.3" fill="#ff0000"/>
<circle cx="1005.8" cy="219.5" r="3.3" fill="#ff0000"/>
<circle cx="1021.7" cy="219.4" r="3.3" fill="#ff0000"/>
<circle cx="1037.5" cy="218.7" r="3.3" fill="#ff0000"/>
<path d="M562.5 208.1 L566.3 214.7 L558.7 214.7 Z" fill="#00ff00"/>
<path d="M578.3 209.8 L582.1 216.4 L574.5 216.4 Z" fill="#00ff00"/>
<path d="M594.2 211.5 L598.0 218.1 L590.4 218.1 Z" fill="#00ff00"/>
<path d="M610.0 212.3 L613.8 218.9 L606.2 218.9 Z" fill="#00ff00"/>
<path d="M625.8 213.7 L629.6 220.3 L622.0 220.3 Z" fill="#00ff00"/>
<path d="M641.7 214.9 L645.5 221.5 L637.9 221.5 Z" fill="#00ff00"/>
<path d="M657.5 213.2 L661.3 219.8 L653.7 219.8 Z" fill="#00ff00"/>
<path d="M673.3 214.2 L677.1 220.8 L669.5 220.8 Z" fill="#00ff00"/>
<path d="M689.2 213.2 L693.0 219.8 L685.4 219.8 Z" fill="#00ff00"/>
<path d="M705.0 213.7 L708.8 220.3 L701.2 220.3 Z" fill="#00ff00"/>
<path d="M720.8 215.8 L724.6 222.4 L717.0 222.4 Z" fill="#00ff00"/>
<path d="M736.7 215.4 L740.5 222.0 L732.9 222.0 Z" fill="#00ff00"/>
<path d="M752.5 216.1 L756.3 222.7 L748.7 222.7 Z" fill="#00ff00"/>
<path d="M768.3 216.1 L772.1 222.7 L764.5 222.7 Z" fill="#00ff00"/>
<path d="M784.2 216.8 L788.0 223.4 L780.4 223.4 Z" fill="#00ff00"/>
<path d="M800.0 216.4 L803.8 223.0 L796.2 223.0 Z" fill="#00ff00"/>
<path d="M815.8 215.6 L819.6 222.2 L812.0 222.2 Z" fill="#00ff00"/>
<path d="M831.7 214.2 L835.5 220.8 L827.9 220.8 Z" fill="#00ff00"/>
<path d="M847.5 215.4 L851.3 222.0 L843.7 222.0 Z" fill="#00ff00"/>
<path d="M863.3 213.5 L867.1 220.1 L859.5 220.1 Z" fill="#00ff00"/>
<path d="M879.2 214.2 L883.0 220.8 L875.4 220.8 Z" fill="#00ff00"/>
<path d="M895.0 216.6 L898.8 223.2 L891.2 223.2 Z" fill="#00ff00"/>
<path d="M910.8 217.3 L914.6 223.9 L907.0 223.9 Z" fill="#00ff00"/>
<path d="M926.7 214.1 L930.5 220.7 L922.9 220.7 Z" fill="#00ff00"/>
<path d="M942.5 217.8 L946.3 224.4 L938.7 224.4 Z" fill="#00ff00"/>
<path d="M958.3 216.6 L962.1 223.2 L954.5 223.2 Z" fill="#00ff00"/>
<path d="M974.2 216.3 L978.0 222.9 L970.4 222.9 Z" fill="#00ff00"/>
<path d="M990.0 213.4 L993.8 220.0 L986.2 220.0 Z" fill="#00ff00"/>
<path d="M1005.8 214.2 L1009.6 220.8 L1002.0 220.8 Z" fill="#00ff00"/>
<path d="M1021.7 215.6 L1025.5 222.2 L1017.9 222.2 Z" fill="#00ff00"/>
<path d="M1037.5 216.1 L1041.3 222.7 L1033.7 222.7 Z" fill="#00ff00"/>
</g></svg>
<div class="a" style="left:1044px;top:170px;width:2px;height:181px;background:#d8d8d8"></div>
<div class="t" style="right:491px;top:298.5px;font:7.5px 'Liberation Sans';color:#d8d8d8;letter-spacing:1.1px;transform:scaleX(1.12);transform-origin:100% 50%">0</div>
<div class="t" style="right:491px;top:281.5px;font:7.5px 'Liberation Sans';color:#d8d8d8;letter-spacing:1.1px;transform:scaleX(1.12);transform-origin:100% 50%">10</div>
<div class="t" style="right:491px;top:264.5px;font:7.5px 'Liberation Sans';color:#d8d8d8;letter-spacing:1.1px;transform:scaleX(1.12);transform-origin:100% 50%">20</div>
<div class="t" style="right:491px;top:247.5px;font:7.5px 'Liberation Sans';color:#d8d8d8;letter-spacing:1.1px;transform:scaleX(1.12);transform-origin:100% 50%">30</div>
<div class="t" style="right:491px;top:230.5px;font:7.5px 'Liberation Sans';color:#d8d8d8;letter-spacing:1.1px;transform:scaleX(1.12);transform-origin:100% 50%">40</div>
<div class="t" style="right:491px;top:213.5px;font:7.5px 'Liberation Sans';color:#d8d8d8;letter-spacing:1.1px;transform:scaleX(1.12);transform-origin:100% 50%">50</div>
<div class="t" style="left:523.0px;width:80px;text-align:center;top:306.3px;font:7.5px 'Liberation Sans';color:#d8d8d8;letter-spacing:1.1px;transform:scaleX(1.12)">30,0</div>
<div class="t" style="left:562.6px;width:80px;text-align:center;top:306.3px;font:7.5px 'Liberation Sans';color:#d8d8d8;letter-spacing:1.1px;transform:scaleX(1.12)">32,5</div>
<div class="t" style="left:602.2px;width:80px;text-align:center;top:306.3px;font:7.5px 'Liberation Sans';color:#d8d8d8;letter-spacing:1.1px;transform:scaleX(1.12)">35,0</div>
<div class="t" style="left:641.8px;width:80px;text-align:center;top:306.3px;font:7.5px 'Liberation Sans';color:#d8d8d8;letter-spacing:1.1px;transform:scaleX(1.12)">37,5</div>
<div class="t" style="left:681.3px;width:80px;text-align:center;top:306.3px;font:7.5px 'Liberation Sans';color:#d8d8d8;letter-spacing:1.1px;transform:scaleX(1.12)">40,0</div>
<div class="t" style="left:720.9px;width:80px;text-align:center;top:306.3px;font:7.5px 'Liberation Sans';color:#d8d8d8;letter-spacing:1.1px;transform:scaleX(1.12)">42,5</div>
<div class="t" style="left:760.5px;width:80px;text-align:center;top:306.3px;font:7.5px 'Liberation Sans';color:#d8d8d8;letter-spacing:1.1px;transform:scaleX(1.12)">45,0</div>
<div class="t" style="left:800.1px;width:80px;text-align:center;top:306.3px;font:7.5px 'Liberation Sans';color:#d8d8d8;letter-spacing:1.1px;transform:scaleX(1.12)">47,5</div>
<div class="t" style="left:839.7px;width:80px;text-align:center;top:306.3px;font:7.5px 'Liberation Sans';color:#d8d8d8;letter-spacing:1.1px;transform:scaleX(1.12)">50,0</div>
<div class="t" style="left:879.2px;width:80px;text-align:center;top:306.3px;font:7.5px 'Liberation Sans';color:#d8d8d8;letter-spacing:1.1px;transform:scaleX(1.12)">52,5</div>
<div class="t" style="left:918.8px;width:80px;text-align:center;top:306.3px;font:7.5px 'Liberation Sans';color:#d8d8d8;letter-spacing:1.1px;transform:scaleX(1.12)">55,0</div>
<div class="t" style="left:958.4px;width:80px;text-align:center;top:306.3px;font:7.5px 'Liberation Sans';color:#d8d8d8;letter-spacing:1.1px;transform:scaleX(1.12)">57,5</div>
<div class="t" style="left:998.0px;width:80px;text-align:center;top:306.3px;font:7.5px 'Liberation Sans';color:#d8d8d8;letter-spacing:1.1px;transform:scaleX(1.12)">60,0</div>
<div class="t" style="left:496px;top:250px;width:72px;text-align:center;font:10px 'Liberation Sans';color:#e8e8e8;transform:rotate(-90deg);transform-origin:36px 6px;letter-spacing:0px">MBits (BW)</div>
<div class="t" style="left:771px;top:318px;font:11px 'Liberation Sans';color:#f0f0f0;letter-spacing:0.6px">Time (sec)</div>
<div class="t" style="left:728px;top:188px;font:bold 14px 'Liberation Sans';color:#fff;letter-spacing:0.4px;transform:scaleX(1.22);transform-origin:0 0">Bandwidth</div>
<div class="t" style="right:4px;top:172px;font:bold 12px 'Liberation Sans',sans-serif;color:#fff;text-align:right;">dim., 18 janv. 2015 14:39:33</div>
<div class="t " style="left:504px;top:337px;font:bold 12px 'Liberation Sans',sans-serif;color:#00ff00;">#180: [49,30MBits/s]</div>
<div class="t " style="left:639px;top:337px;font:bold 12px 'Liberation Sans',sans-serif;color:#ff0000;">#156: [49,20MBits/s]</div>
<div class="t " style="left:774px;top:337px;font:bold 12px 'Liberation Sans',sans-serif;color:#ffff00;">#172: [47,50MBits/s]</div>
<div class="t " style="left:909px;top:337px;font:bold 12px 'Liberation Sans',sans-serif;color:#0000ff;">#164: [49,30MBits/s]</div>
<div class="a" style="left:504px;top:351px;width:542px;height:213px;background:#eeeeee"></div>
<div class="a" style="left:503px;top:170px;width:1px;height:394px;background:#7a8a99"></div>
<div class="a" style="left:504px;top:351px;width:542px;height:9px;background:#f2f2f2"></div>
<div class="a" style="left:520px;top:354px;width:526px;height:5px;background-image:radial-gradient(circle,#9a9a9a 0.8px,transparent 1px);background-size:4px 2.5px"></div>
<div class="a" style="left:507px;top:352px;width:0;height:0;border-left:4.5px solid transparent;border-right:4.5px solid transparent;border-bottom:5px solid #5a7cc0"></div>
<div class="a" style="left:518px;top:352px;width:0;height:0;border-left:4.5px solid transparent;border-right:4.5px solid transparent;border-top:5px solid #5a7cc0"></div>
<div class="a" style="left:504px;top:360px;width:542px;height:1px;background:#9aa0a8"></div>
<svg class="a" style="left:504px;top:362px" width="64" height="24"><path d="M2.5 23.5 V8 L9 1.5 H60.5 V23.5" fill="#c6d9f0" stroke="#6e8fc4" stroke-width="1"/></svg>
<div class="t " style="left:516px;top:366px;font:bold 12px 'Liberation Sans',sans-serif;color:#333;letter-spacing:-0.15px">Output</div>
<div class="a" style="left:565px;top:382px;width:481px;height:1px;background:#6e8fc4"></div>
<div class="a" style="left:505px;top:383px;width:541px;height:145px;background:#c6d9f0;border:1px solid #8aa8d0;border-top:none"></div>
<div class="a" style="left:507px;top:386px;width:536px;height:138px;background:#ffffff;border:1px solid #7a8a99"></div>
<div class="a" style="left:0;top:0;width:1048px;height:988px;clip-path:inset(387px 23px 465px 508px)">
<div class="t " style="left:507px;top:381px;font:12px 'Liberation Sans',sans-serif;color:#333;">[ID] Interval       Transfer     Bandwidth</div>
<div class="t " style="left:507px;top:397px;font:12px 'Liberation Sans',sans-serif;color:#333;">[164]  0.0-60.1 sec   353 MBytes  49.3 Mbits/sec</div>
<div class="t " style="left:507px;top:413px;font:12px 'Liberation Sans',sans-serif;color:#333;">[156]  0.0-60.1 sec   353 MBytes  49.2 Mbits/sec</div>
<div class="t " style="left:507px;top:429px;font:12px 'Liberation Sans',sans-serif;color:#333;">[172]  0.0-60.1 sec   341 MBytes  47.5 Mbits/sec</div>
<div class="t " style="left:507px;top:445px;font:12px 'Liberation Sans',sans-serif;color:#333;">[180]  0.0-60.1 sec   353 MBytes  49.3 Mbits/sec</div>
<div class="t " style="left:507px;top:461px;font:12px 'Liberation Sans',sans-serif;color:#333;">[SUM]  0.0-60.1 sec  1400 MBytes   195 Mbits/sec</div>
<div class="t " style="left:507px;top:477px;font:12px 'Liberation Sans',sans-serif;color:#333;">Done.</div>
</div>
<div class="a" style="left:505px;top:397px;width:276px;height:83px;border:2px solid #e8141c"></div>
<div class="a" style="left:1025px;top:387px;width:16px;height:136px;background:#eeeeee;border-left:1px solid #b8cfe5"></div>
<div class="a" style="left:1025px;top:387px;width:16px;height:16px;background:linear-gradient(180deg,#ffffff,#e6e6e6);border:1px solid #b8cfe5;border-bottom-color:#7a8a99"></div>
<div class="a" style="left:1028px;top:392px;width:0;height:0;border-left:5px solid transparent;border-right:5px solid transparent;border-bottom:5px solid #222"></div>
<div class="a" style="left:1025px;top:493px;width:16px;height:15px;background:linear-gradient(90deg,#a8c4e4,#ffffff 30%,#d8e6f4 70%,#b8d0ea);border:1px solid #6e8eba"></div>
<div class="a" style="left:1029px;top:497px;width:8px;height:1px;background:#5a7ec0"></div>
<div class="a" style="left:1029px;top:500px;width:8px;height:1px;background:#5a7ec0"></div>
<div class="a" style="left:1029px;top:503px;width:8px;height:1px;background:#5a7ec0"></div>
<div class="a" style="left:1025px;top:508px;width:16px;height:15px;background:linear-gradient(180deg,#ffffff,#e6e6e6);border:1px solid #b8cfe5"></div>
<div class="a" style="left:1028px;top:513px;width:0;height:0;border-left:5px solid transparent;border-right:5px solid transparent;border-top:5px solid #222"></div>
<div class="a" style="left:595px;top:533px;width:62px;height:26px;background:linear-gradient(180deg,#ffffff,#dde8f3);border:1px solid #7a8a99"></div>
<div class="t" style="left:595px;width:62px;text-align:center;top:540px;font:bold 12px 'Liberation Sans';color:#333">Save</div>
<div class="a" style="left:662px;top:533px;width:91px;height:26px;background:linear-gradient(180deg,#ffffff,#dde8f3);border:1px solid #7a8a99"></div>
<div class="t" style="left:662px;width:91px;text-align:center;top:540px;font:bold 12px 'Liberation Sans';color:#333">Clear now</div>
<div class="a" style="left:762px;top:540px;width:13px;height:13px;border:1px solid #7d8c9c;background:linear-gradient(180deg,#ffffff 10%,#d2e0f0)"></div>
<div class="t " style="left:779px;top:540px;font:bold 12px 'Liberation Sans',sans-serif;color:#333;letter-spacing:-0.15px">Clear Output for new Iperf Run</div>
<div class="a" style="left:5px;top:572px;width:676px;height:420px;border:1px solid #1a3a60;border-radius:7px 7px 0 0;background:linear-gradient(90deg,#9cd8f2 0,#d0f0fc 50px,#f4fcff 130px,#fbfaf0 190px,#f8f0b0 235px,#f2e88a 270px,#a8d8f0 290px,#48a8ea 305px,#3298e4 400px,#2a8ce0 676px)"></div>
<div class="a" style="left:6px;top:573px;width:674px;height:13px;background:linear-gradient(180deg,rgba(255,255,255,.35),rgba(255,255,255,0));border-radius:6px 6px 0 0"></div>
<svg class="a" style="left:13px;top:579px" width="17" height="16">
<rect x="6" y="0.5" width="10" height="8" rx="1" fill="#c8c8c8" stroke="#303030" stroke-width="0.8"/><rect x="7.5" y="2" width="6" height="4.5" fill="#2040c0"/>
<rect x="0.5" y="6.5" width="10" height="8" rx="1" fill="#c8c8c8" stroke="#303030" stroke-width="0.8"/><rect x="2" y="8" width="6" height="4.5" fill="#2040c0"/>
<path d="M4 12 L13 3" stroke="#f0e000" stroke-width="2.2"/></svg>
<div class="a" style="left:33px;top:581px;width:87px;height:14px;background:linear-gradient(90deg,#a0b0b8,#9aacb4 20%,#b0c4c8 40%,#8aa8c0 60%,#a8c0d0 80%,#d8e0e8);opacity:.8;filter:blur(0.6px)"></div>
<div class="a" style="left:570px;top:573px;width:103px;height:19px;background:linear-gradient(180deg,rgba(255,255,255,.25),rgba(255,255,255,.05));border:1px solid #2a5a90;border-top:none;border-radius:0 0 5px 5px;box-shadow:inset 0 0 0 1px rgba(255,255,255,.35)"></div>
<div class="a" style="left:598px;top:574px;width:1px;height:17px;background:#3a6ea8"></div>
<div class="a" style="left:625px;top:574px;width:1px;height:17px;background:#3a6ea8"></div>
<div class="a" style="left:579px;top:582px;width:12px;height:5px;background:#f8f8f8;border:1px solid #505050;border-radius:1px"></div>
<div class="a" style="left:607px;top:577px;width:10px;height:10px;border:2px solid #f8f8f8;outline:1px solid #505050;background:#3a78c0"></div>
<svg class="a" style="left:643px;top:576px" width="13" height="12"><path d="M1.5 1.5 L11.5 10.5 M11.5 1.5 L1.5 10.5" stroke="#404040" stroke-width="3.6"/><path d="M1.5 1.5 L11.5 10.5 M11.5 1.5 L1.5 10.5" stroke="#f8f8f8" stroke-width="2.2"/></svg>
<div class="a" style="left:6px;top:598px;width:6px;height:394px;background:linear-gradient(180deg,#c8eefc,#e8f8fe 60px,#90d0f4 180px,#60b4ec 400px)"></div>
<div class="a" style="left:12px;top:601px;width:644px;height:391px;background:#000"></div>
<div class="t" style="left:13.5px;top:605px;font:13.333px 'Liberation Mono',monospace;line-height:16px;height:16px;color:#b8b8b8;transform:scaleY(0.87);transform-origin:0 0">[  8]  0.0-60.1 sec   356 MBytes  49.7 Mbits/sec</div>
<div class="t" style="left:13.5px;top:621px;font:13.333px 'Liberation Mono',monospace;line-height:16px;height:16px;color:#b8b8b8;transform:scaleY(0.87);transform-origin:0 0">[  4]  0.0-60.1 sec   356 MBytes  49.7 Mbits/sec</div>
<div class="t" style="left:13.5px;top:637px;font:13.333px 'Liberation Mono',monospace;line-height:16px;height:16px;color:#b8b8b8;transform:scaleY(0.87);transform-origin:0 0">[  5]  0.0-60.1 sec   356 MBytes  49.7 Mbits/sec</div>
<div class="t" style="left:13.5px;top:653px;font:13.333px 'Liberation Mono',monospace;line-height:16px;height:16px;color:#b8b8b8;transform:scaleY(0.87);transform-origin:0 0">[  6]  0.0-60.1 sec   312 MBytes  43.6 Mbits/sec</div>
<div class="t" style="left:13.5px;top:669px;font:13.333px 'Liberation Mono',monospace;line-height:16px;height:16px;color:#b8b8b8;transform:scaleY(0.87);transform-origin:0 0">[SUM]  0.0-60.1 sec  1380 MBytes   193 Mbits/sec</div>
<div class="t" style="left:13.5px;top:685px;font:13.333px 'Liberation Mono',monospace;line-height:16px;height:16px;color:#b8b8b8;transform:scaleY(0.87);transform-origin:0 0">[  7] local 192.168.1.10 port 5001 connected with 192.168.1.6 port 54261</div>
<div class="t" style="left:13.5px;top:701px;font:13.333px 'Liberation Mono',monospace;line-height:16px;height:16px;color:#b8b8b8;transform:scaleY(0.87);transform-origin:0 0">[  4] local 192.168.1.10 port 5001 connected with 192.168.1.6 port 54262</div>
<div class="t" style="left:13.5px;top:717px;font:13.333px 'Liberation Mono',monospace;line-height:16px;height:16px;color:#b8b8b8;transform:scaleY(0.87);transform-origin:0 0">[  5] local 192.168.1.10 port 5001 connected with 192.168.1.6 port 54263</div>
<div class="t" style="left:13.5px;top:733px;font:13.333px 'Liberation Mono',monospace;line-height:16px;height:16px;color:#b8b8b8;transform:scaleY(0.87);transform-origin:0 0">[  6] local 192.168.1.10 port 5001 connected with 192.168.1.6 port 54264</div>
<div class="t" style="left:13.5px;top:749px;font:13.333px 'Liberation Mono',monospace;line-height:16px;height:16px;color:#b8b8b8;transform:scaleY(0.87);transform-origin:0 0">[  7]  0.0-60.1 sec   348 MBytes  48.5 Mbits/sec</div>
<div class="t" style="left:13.5px;top:765px;font:13.333px 'Liberation Mono',monospace;line-height:16px;height:16px;color:#b8b8b8;transform:scaleY(0.87);transform-origin:0 0">[  4]  0.0-60.1 sec   347 MBytes  48.5 Mbits/sec</div>
<div class="t" style="left:13.5px;top:781px;font:13.333px 'Liberation Mono',monospace;line-height:16px;height:16px;color:#b8b8b8;transform:scaleY(0.87);transform-origin:0 0">[  5]  0.0-60.1 sec   348 MBytes  48.6 Mbits/sec</div>
<div class="t" style="left:13.5px;top:797px;font:13.333px 'Liberation Mono',monospace;line-height:16px;height:16px;color:#b8b8b8;transform:scaleY(0.87);transform-origin:0 0">[  6]  0.0-60.1 sec   347 MBytes  48.5 Mbits/sec</div>
<div class="t" style="left:13.5px;top:813px;font:13.333px 'Liberation Mono',monospace;line-height:16px;height:16px;color:#b8b8b8;transform:scaleY(0.87);transform-origin:0 0">[SUM]  0.0-60.1 sec  1390 MBytes   194 Mbits/sec</div>
<div class="t" style="left:13.5px;top:829px;font:13.333px 'Liberation Mono',monospace;line-height:16px;height:16px;color:#b8b8b8;transform:scaleY(0.87);transform-origin:0 0">[  8] local 192.168.1.10 port 5001 connected with 192.168.1.6 port 54410</div>
<div class="t" style="left:13.5px;top:845px;font:13.333px 'Liberation Mono',monospace;line-height:16px;height:16px;color:#b8b8b8;transform:scaleY(0.87);transform-origin:0 0">[  4] local 192.168.1.10 port 5001 connected with 192.168.1.6 port 54411</div>
<div class="t" style="left:13.5px;top:861px;font:13.333px 'Liberation Mono',monospace;line-height:16px;height:16px;color:#b8b8b8;transform:scaleY(0.87);transform-origin:0 0">[  5] local 192.168.1.10 port 5001 connected with 192.168.1.6 port 54412</div>
<div class="t" style="left:13.5px;top:877px;font:13.333px 'Liberation Mono',monospace;line-height:16px;height:16px;color:#b8b8b8;transform:scaleY(0.87);transform-origin:0 0">[  6] local 192.168.1.10 port 5001 connected with 192.168.1.6 port 54413</div>
<div class="t" style="left:13.5px;top:893px;font:13.333px 'Liberation Mono',monospace;line-height:16px;height:16px;color:#b8b8b8;transform:scaleY(0.87);transform-origin:0 0">[  8]  0.0-60.1 sec   353 MBytes  49.2 Mbits/sec</div>
<div class="t" style="left:13.5px;top:909px;font:13.333px 'Liberation Mono',monospace;line-height:16px;height:16px;color:#b8b8b8;transform:scaleY(0.87);transform-origin:0 0">[  4]  0.0-60.1 sec   353 MBytes  49.3 Mbits/sec</div>
<div class="t" style="left:13.5px;top:925px;font:13.333px 'Liberation Mono',monospace;line-height:16px;height:16px;color:#b8b8b8;transform:scaleY(0.87);transform-origin:0 0">[  5]  0.0-60.1 sec   341 MBytes  47.5 Mbits/sec</div>
<div class="t" style="left:13.5px;top:941px;font:13.333px 'Liberation Mono',monospace;line-height:16px;height:16px;color:#b8b8b8;transform:scaleY(0.87);transform-origin:0 0">[  6]  0.0-60.1 sec   353 MBytes  49.3 Mbits/sec</div>
<div class="t" style="left:13.5px;top:957px;font:13.333px 'Liberation Mono',monospace;line-height:16px;height:16px;color:#b8b8b8;transform:scaleY(0.87);transform-origin:0 0">[SUM]  0.0-60.1 sec  1400 MBytes   195 Mbits/sec</div>
<div class="a" style="left:14px;top:889px;width:394px;height:86px;border:2px solid #ff1010"></div>
<div class="a" style="left:14px;top:971px;width:8px;height:16px;border:1px solid #00ff00"></div>
<div class="a" style="left:655px;top:601px;width:17px;height:391px;background:linear-gradient(90deg,#e8e8e8,#f4f4f4 50%,#e8e8e8)"></div>
<div class="a" style="left:659px;top:609px;width:0;height:0;border-left:4.5px solid transparent;border-right:4.5px solid transparent;border-bottom:4.5px solid #333"></div>
<div class="a" style="left:657px;top:905px;width:14px;height:65px;background:linear-gradient(90deg,#f4f4f4,#e0e0e0 60%,#c8c8c8);border:1px solid #8a8a8a;border-radius:2px"></div>
<div class="a" style="left:660px;top:933px;width:8px;height:1px;background:#404040"></div>
<div class="a" style="left:660px;top:936px;width:8px;height:1px;background:#404040"></div>
<div class="a" style="left:660px;top:939px;width:8px;height:1px;background:#404040"></div>
<div class="a" style="left:659px;top:977px;width:0;height:0;border-left:4.5px solid transparent;border-right:4.5px solid transparent;border-top:4.5px solid #333"></div>
<div class="a" style="left:679px;top:572px;width:372px;height:420px;border:1px solid #0e2a4e;border-radius:7px 0 0 0;background:linear-gradient(180deg,#3a8ae0,#2a7ed8 40px,#2a7cd8)"></div>
<div class="a" style="left:680px;top:573px;width:368px;height:17px;background:linear-gradient(180deg,rgba(255,255,255,.28),rgba(255,255,255,.06));border-radius:6px 0 0 0"></div>
<div class="a" style="left:686px;top:600px;width:362px;height:392px;background:#f0f0f0;border-left:1px solid #1e4a80;border-top:1px solid #1e4a80"></div>
<svg class="a" style="left:688px;top:579px" width="18" height="14"><g fill="#7ad070" stroke="#2a6a30" stroke-width="0.8">
<rect x="1" y="9.5" width="2.4" height="3"/><rect x="4.6" y="7.5" width="2.4" height="5"/><rect x="8.2" y="5" width="2.4" height="7.5"/><rect x="11.8" y="2.5" width="2.4" height="10"/><rect x="15" y="0.5" width="2.4" height="12"/></g></svg>
<div class="a" style="left:705px;top:575px;width:195px;height:20px;background:radial-gradient(ellipse at center,rgba(255,255,255,.45),rgba(255,255,255,0) 70%)"></div>
<div class="t" style="left:709px;top:581px;font:12px 'Liberation Sans';color:#000;letter-spacing:-0.1px">État de Connexion réseau sans fil 2</div>
<div class="a" style="left:1003px;top:573px;width:49px;height:18px;background:linear-gradient(180deg,rgba(255,255,255,.3),rgba(255,255,255,.08));border:1px solid #1e4a80;border-top:none;border-radius:0 0 0 5px;box-shadow:inset 0 0 0 1px rgba(255,255,255,.3)"></div>
<svg class="a" style="left:1019px;top:576px" width="13" height="12"><path d="M1.5 1.5 L11.5 10.5 M11.5 1.5 L1.5 10.5" stroke="#404040" stroke-width="3.6"/><path d="M1.5 1.5 L11.5 10.5 M11.5 1.5 L1.5 10.5" stroke="#f8f8f8" stroke-width="2.2"/></svg>
<div class="a" style="left:694px;top:629px;width:347px;height:353px;background:#ffffff;border:1px solid #898c95"></div>
<div class="a" style="left:694px;top:609px;width:53px;height:21px;background:#ffffff;border:1px solid #898c95;border-bottom:none;border-radius:2px 2px 0 0"></div>
<div class="t" style="left:701px;top:613px;font:11.5px 'Liberation Sans';color:#1a1a1a">Général</div>
<div class="t " style="left:709px;top:647px;font:11px 'Liberation Sans',sans-serif;color:#1a1a1a;">Connexion</div>
<div class="a" style="left:770px;top:652px;width:255px;height:1px;background:#b8b8b8"></div>
<div class="t " style="left:723px;top:666px;font:11px 'Liberation Sans',sans-serif;color:#1a1a1a;">Connectivité IPv4 :</div>
<div class="t" style="right:35px;top:666px;font:11px 'Liberation Sans',sans-serif;color:#1a1a1a;text-align:right;">Internet</div>
<div class="t " style="left:723px;top:684px;font:11px 'Liberation Sans',sans-serif;color:#1a1a1a;">Connectivité IPv6 :</div>
<div class="t" style="right:35px;top:684px;font:11px 'Liberation Sans',sans-serif;color:#1a1a1a;text-align:right;">Pas d’accès Internet</div>
<div class="t " style="left:723px;top:702px;font:11px 'Liberation Sans',sans-serif;color:#1a1a1a;">État du média :</div>
<div class="t" style="right:35px;top:702px;font:11px 'Liberation Sans',sans-serif;color:#1a1a1a;text-align:right;">Activé</div>
<div class="t " style="left:723px;top:720px;font:11px 'Liberation Sans',sans-serif;color:#1a1a1a;">SSID :</div>
<div class="t" style="right:35px;top:720px;font:11px 'Liberation Sans',sans-serif;color:#1a1a1a;text-align:right;letter-spacing:-0.6px">NETGEAR20-5G-1</div>
<div class="t " style="left:723px;top:738px;font:11px 'Liberation Sans',sans-serif;color:#1a1a1a;">Durée :</div>
<div class="t" style="right:35px;top:738px;font:11px 'Liberation Sans',sans-serif;color:#1a1a1a;text-align:right;">1 jour 01:51:10</div>
<div class="t " style="left:723px;top:756px;font:11px 'Liberation Sans',sans-serif;color:#1a1a1a;">Vitesse :</div>
<div class="t" style="right:35px;top:756px;font:11px 'Liberation Sans',sans-serif;color:#1a1a1a;text-align:right;">867,0 Mbits/s</div>
<div class="a" style="left:944px;top:753px;width:76px;height:20px;border:2px solid #e01010"></div>
<div class="t " style="left:723px;top:781px;font:11px 'Liberation Sans',sans-serif;color:#1a1a1a;">Qualité du signal :</div>
<svg class="a" style="left:984px;top:772px" width="31" height="25"><g fill="#3aa040" stroke="#1a5a20" stroke-width="0.6">
<rect x="0.5" y="18" width="4.5" height="6.5"/><rect x="6" y="14" width="4.5" height="10.5"/><rect x="11.5" y="10" width="4.5" height="14.5"/><rect x="17" y="5" width="4.5" height="19.5"/><rect x="22.5" y="0.5" width="5" height="24"/></g>
<g fill="#8ad88a" opacity=".8"><rect x="1.5" y="19" width="1.5" height="4"/><rect x="7" y="15" width="1.5" height="8"/><rect x="12.5" y="11" width="1.5" height="12"/><rect x="18" y="6" width="1.5" height="17"/><rect x="23.5" y="1.5" width="1.5" height="22"/></g></svg>
<div class="a" style="left:725px;top:804px;width:73px;height:21px;background:linear-gradient(180deg,#f2f2f2 0,#ebebeb 50%,#dddddd 51%,#cfcfcf);border:1px solid #707070;border-radius:3px;box-shadow:inset 0 0 0 1px rgba(255,255,255,.8)"></div>
<div class="t" style="left:725px;width:73px;text-align:center;top:809px;font:11.5px 'Liberation Sans';color:#1a1a1a">Détails...</div>
<div class="a" style="left:804px;top:804px;width:133px;height:21px;background:linear-gradient(180deg,#f2f2f2 0,#ebebeb 50%,#dddddd 51%,#cfcfcf);border:1px solid #707070;border-radius:3px;box-shadow:inset 0 0 0 1px rgba(255,255,255,.8)"></div>
<div class="t" style="left:804px;width:133px;text-align:center;top:809px;font:11.5px 'Liberation Sans';color:#1a1a1a">Propriétés sans fil</div>
<div class="t " style="left:709px;top:837px;font:11px 'Liberation Sans',sans-serif;color:#1a1a1a;">Activité</div>
<div class="a" style="left:751px;top:842px;width:274px;height:1px;background:#b8b8b8"></div>
<div class="t " style="left:799px;top:867px;font:11px 'Liberation Sans',sans-serif;color:#1a1a1a;">Envoyés</div>
<div class="a" style="left:847px;top:873px;width:20px;height:2px;background:#8a8a8a"></div>
<div class="a" style="left:933px;top:873px;width:20px;height:2px;background:#8a8a8a"></div>
<div class="t" style="right:36px;top:867px;font:11px 'Liberation Sans',sans-serif;color:#1a1a1a;text-align:right;">Reçus</div>
<svg class="a" style="left:879px;top:854px" width="48" height="45">
<defs><linearGradient id="scr" x1="0" y1="0" x2="1" y2="1"><stop offset="0" stop-color="#1a3ad0"/><stop offset="0.5" stop-color="#3a7af0"/><stop offset="1" stop-color="#c0d8ff"/></linearGradient></defs>
<path d="M14 2 L32 5 L31 22 L14 20 Z" fill="#d8dce4" stroke="#707888" stroke-width="1"/><path d="M16 4.5 L30 7 L29.5 19.5 L16 18 Z" fill="url(#scr)"/>
<path d="M1 5 L22 9 L21 29 L2 26 Z" fill="#e0e4ea" stroke="#707888" stroke-width="1"/><path d="M3.5 8 L19.5 11 L19 26 L4 23.5 Z" fill="url(#scr)"/>
<ellipse cx="13" cy="34" rx="8" ry="3" fill="#c8ccd4" stroke="#8a909a" stroke-width="0.8"/><rect x="11" y="28" width="4" height="5" fill="#b0b4bc"/>
<g fill="#3aa040" stroke="#1a5a20" stroke-width="0.5"><rect x="27" y="39" width="3.5" height="5"/><rect x="31" y="35" width="3.5" height="9"/><rect x="35" y="31" width="3.5" height="13"/><rect x="39" y="27" width="3.5" height="17"/><rect x="43" y="23" width="3.5" height="21"/></g></svg>
<div class="t " style="left:723px;top:900px;font:11px 'Liberation Sans',sans-serif;color:#1a1a1a;">Octets :</div>
<div class="t " style="left:801px;top:900px;font:11px 'Liberation Sans',sans-serif;color:#1a1a1a;">6 125 685 533</div>
<div class="a" style="left:899px;top:903px;width:2px;height:12px;background:#8a8a8a"></div>
<div class="t" style="right:35px;top:900px;font:11px 'Liberation Sans',sans-serif;color:#1a1a1a;text-align:right;">533 484 559</div>
<div class="a" style="left:710px;top:944px;width:81px;height:21px;background:linear-gradient(180deg,#f2f2f2 0,#ebebeb 50%,#dddddd 51%,#cfcfcf);border:1px solid #707070;border-radius:3px;box-shadow:inset 0 0 0 1px rgba(255,255,255,.8)"></div>
<svg class="a" style="left:716px;top:947px" width="15" height="15"><path d="M7.5 0.5 L14 3 V7.5 Q14 12 7.5 14.5 Q1 12 1 7.5 V3 Z" fill="#2f6ed0" stroke="#34507a" stroke-width="0.7"/>
<path d="M7.5 1.5 V13.5 Q13 11.5 13 7.5 H7.5 Z" fill="#ffd428"/><path d="M7.5 7.5 H2 Q2 11.5 7.5 13.5 Z" fill="#ffd428"/><path d="M7.5 1.5 L2 3.6 V7.5 H7.5 Z" fill="#4a8ae8"/></svg>
<div class="t" style="left:732px;top:949px;font:11.5px 'Liberation Sans';color:#1a1a1a">Propriétés</div>
<div class="a" style="left:797px;top:944px;width:80px;height:21px;background:linear-gradient(180deg,#f2f2f2 0,#ebebeb 50%,#dddddd 51%,#cfcfcf);border:1px solid #707070;border-radius:3px;box-shadow:inset 0 0 0 1px rgba(255,255,255,.8)"></div>
<svg class="a" style="left:803px;top:947px" width="15" height="15"><path d="M7.5 0.5 L14 3 V7.5 Q14 12 7.5 14.5 Q1 12 1 7.5 V3 Z" fill="#2f6ed0" stroke="#34507a" stroke-width="0.7"/>
<path d="M7.5 1.5 V13.5 Q13 11.5 13 7.5 H7.5 Z" fill="#ffd428"/><path d="M7.5 7.5 H2 Q2 11.5 7.5 13.5 Z" fill="#ffd428"/><path d="M7.5 1.5 L2 3.6 V7.5 H7.5 Z" fill="#4a8ae8"/></svg>
<div class="t" style="left:819px;top:949px;font:11.5px 'Liberation Sans';color:#1a1a1a">Désactiver</div>
<div class="a" style="left:884px;top:944px;width:81px;height:21px;background:linear-gradient(180deg,#f2f2f2 0,#ebebeb 50%,#dddddd 51%,#cfcfcf);border:1px solid #707070;border-radius:3px;box-shadow:inset 0 0 0 1px rgba(255,255,255,.8)"></div>
<div class="t" style="left:884px;width:81px;text-align:center;top:949px;font:11.5px 'Liberation Sans';color:#1a1a1a">Diagnostiquer</div>
</body></html>
